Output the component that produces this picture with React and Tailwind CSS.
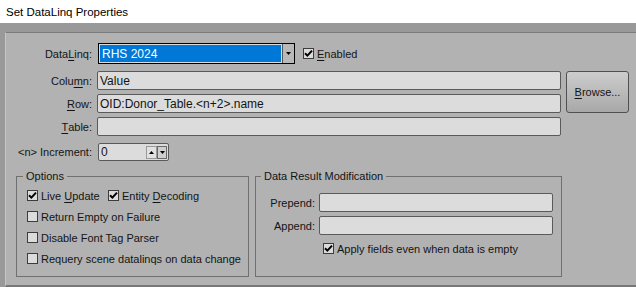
import React from "react";

// Mnemonic letter underline
const U = ({ children }) => <span className="underline underline-offset-2">{children}</span>;

const CheckBox = ({ checked }) => (
  <span className="w-[11px] h-[11px] shrink-0 border border-[#3c3c3c] bg-[#dcdcdc] flex items-center justify-center">
    {checked && (
      <svg width="9" height="9" viewBox="0 0 9 9">
        <path d="M1 4.2 L3.4 6.6 L8 1.6" fill="none" stroke="#000" strokeWidth="2" />
      </svg>
    )}
  </span>
);

const Check = ({ checked, children, className = "" }) => (
  <div className={`flex items-center h-[21px] ${className}`}>
    <CheckBox checked={checked} />
    <span className="ml-[3px] whitespace-nowrap">{children}</span>
  </div>
);

const TextBox = ({ value, className = "" }) => (
  <div
    className={`h-[19px] bg-[#dcdcdc] border border-[#5a5a5a] rounded-[2px] flex items-center pl-[2px] whitespace-nowrap ${className}`}
  >
    {value}
  </div>
);

const Label = ({ children, className = "" }) => (
  <div className={`text-right whitespace-nowrap flex items-center justify-end ${className}`}>{children}</div>
);

export default function App() {
  return (
    <div className="w-[636px] h-[287px] flex flex-col bg-white font-['Liberation_Sans',sans-serif] text-[11px] leading-[14px] text-[#141414] overflow-hidden">
      {/* Title bar */}
      <div className="h-[23px] shrink-0 flex items-center pl-[6px] text-[11.5px] text-black">
        Set DataLinq Properties
      </div>

      {/* Window frame */}
      <div className="flex-1 flex flex-col bg-[#999999] pt-[9px] pl-[5px]">
        <div className="flex-1 flex flex-col bg-[#b2b2b2] border-t border-t-[#7c7c7c] border-l border-l-[#c6c6c6] border-b-2 border-b-[#777777] pt-[10px] pl-px">
          {/* DataLinq row */}
          <div className="flex items-center h-[21px]">
            <Label className="w-[85px]">
              Data<U>L</U>inq:
            </Label>
            <div className="ml-[6px] w-[197px] h-[21px] border border-black flex bg-[#dcdcdc]">
              <div className="flex-1 m-px bg-[#0078d7] text-white flex items-center pl-[2px] text-[12px]">RHS 2024</div>
              <div className="w-[12px] border-l border-[#555] bg-[#b9b9b9] flex items-center justify-center">
                <svg width="5" height="3" viewBox="0 0 5 3">
                  <path d="M0 0 H5 L2.5 3 Z" fill="#000" />
                </svg>
              </div>
            </div>
            <Check checked className="ml-[8px]">
              <U>E</U>nabled
            </Check>
          </div>

          {/* Column / Row / Table grid */}
          <div className="mt-[7px] grid grid-cols-[85px_464px_63px] grid-rows-[19px_19px_19px] gap-x-[5px] gap-y-[4px]">
            <Label>
              Colu<U>m</U>n:
            </Label>
            <TextBox value="Value" className="text-[12px]" />
            <button className="row-span-2 border border-[#505050] rounded-[3px] bg-gradient-to-b from-[#cdcdcd] to-[#a8a8a8] text-[#141414] flex items-center justify-center">
              <span>
                <U>B</U>rowse...
              </span>
            </button>
            <Label>
              <U>R</U>ow:
            </Label>
            <TextBox value="OID:Donor_Table.<n+2>.name" className="text-[12px]" />
            <Label>
              <U>T</U>able:
            </Label>
            <TextBox value="" />
          </div>

          {/* Increment row */}
          <div className="mt-[7px] flex items-center h-[18px]">
            <Label className="w-[85px]">&lt;n&gt; Increment:</Label>
            <div className="ml-[6px] w-[71px] h-[18px] bg-[#dcdcdc] border border-[#5a5a5a] rounded-[2px] flex items-center pl-[2px]">
              <span className="flex-1 text-[12px]">0</span>
              <div className="flex mr-px">
                <div className="w-[11px] h-[13px] border border-[#9a9a9a] bg-[#e2e2e2] flex items-center justify-center">
                  <svg width="5" height="3" viewBox="0 0 5 3">
                    <path d="M0 3 H5 L2.5 0 Z" fill="#000" />
                  </svg>
                </div>
                <div className="w-[10px] h-[13px] border border-[#6a6a6a] bg-[#cfcfcf] flex items-center justify-center">
                  <svg width="5" height="3" viewBox="0 0 5 3">
                    <path d="M0 0 H5 L2.5 3 Z" fill="#000" />
                  </svg>
                </div>
              </div>
            </div>
          </div>

          {/* Group boxes */}
          <div className="mt-[8px] ml-[9px] flex gap-[6px]">
            <fieldset className="w-[233px] min-w-0 shrink-0 h-[108px] border border-[#707070] pl-[10px]">
              <legend className="ml-[-4px] px-[3px]">Options</legend>
              <div className="pt-[2px] flex flex-col">
                <div className="flex">
                  <Check checked className="w-[81px]">
                    Live <U>U</U>pdate
                  </Check>
                  <Check checked>
                    Entity <U>D</U>ecoding
                  </Check>
                </div>
                <Check>Return Empty on Failure</Check>
                <Check>Disable Font Tag Parser</Check>
                <Check>Requery scene datalinqs on data change</Check>
              </div>
            </fieldset>

            <fieldset className="w-[307px] min-w-0 shrink-0 h-[108px] border border-[#707070]">
              <legend className="ml-[5px] px-[3px]">Data Result Modification</legend>
              <div className="pt-[10px] flex flex-col gap-[4px]">
                <div className="flex items-center">
                  <Label className="w-[59px]">Prepend:</Label>
                  <TextBox value="" className="ml-[4px] w-[234px]" />
                </div>
                <div className="flex items-center">
                  <Label className="w-[59px]">Append:</Label>
                  <TextBox value="" className="ml-[4px] w-[234px]" />
                </div>
                <Check checked className="ml-[67px] mt-[-1px]">
                  Apply fields even when data is empty
                </Check>
              </div>
            </fieldset>
          </div>
        </div>
      </div>
    </div>
  );
}
